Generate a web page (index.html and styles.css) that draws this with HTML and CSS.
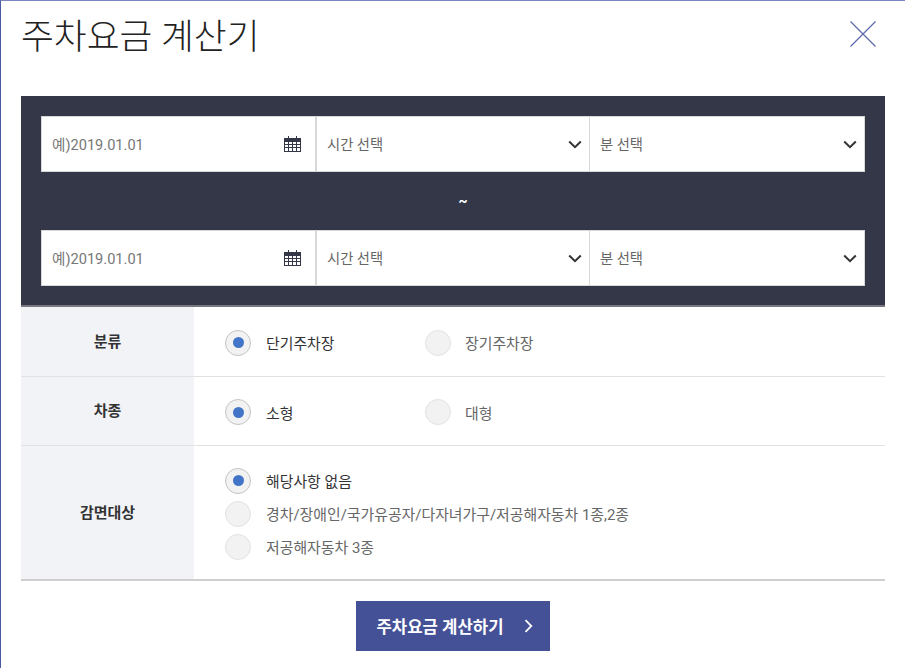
FILE: index.html
```html
<!DOCTYPE html>
<html lang="ko">
<head>
    <meta charset="UTF-8">
    <meta name="viewport" content="width=device-width, initial-scale=1.0">
    <title>주차요금 계산기</title>
    <link rel="stylesheet" href="styles.css">
</head>
<body>
    <div class="popup">
        <header class="popuphead">
            <h1>주차요금 계산기</h1>
            <button class="close" type="button" aria-label="닫기">
                <svg width="26" height="26" viewBox="0 0 26 26"><path d="M0.5 0.5L25.5 25.5M25.5 0.5L0.5 25.5" fill="none" stroke="#5a68ad" stroke-width="1.2"/></svg>
            </button>
        </header>

        <div class="datebox">
            <div class="daterow">
                <div class="field datefield">
                    <span class="placeholder">예)2019.01.01</span>
                    <svg class="calicon" width="17" height="16" viewBox="0 0 17 16"><path d="M4 0h1v2H4zM12 0h1v2h-1z" fill="#333748"/><path fill-rule="evenodd" fill="#333748" d="M0 2h17v14H0zM1 6v2h3V6zM5 6v2h3V6zM9 6v2h3V6zM13 6v2h3V6zM1 9v2h3V9zM5 9v2h3V9zM9 9v2h3V9zM13 9v2h3V9zM1 12v3h3v-3zM5 12v3h3v-3zM9 12v3h3v-3zM13 12v3h3v-3z"/></svg>
                </div>
                <div class="field selectfield timefield">
                    <span>시간 선택</span>
                    <svg class="chevron" width="14" height="9" viewBox="0 0 14 9"><path d="M1.2 1.5L7 7.2L12.8 1.5" fill="none" stroke="#333" stroke-width="2"/></svg>
                </div>
                <div class="field selectfield">
                    <span>분 선택</span>
                    <svg class="chevron" width="14" height="9" viewBox="0 0 14 9"><path d="M1.2 1.5L7 7.2L12.8 1.5" fill="none" stroke="#333" stroke-width="2"/></svg>
                </div>
            </div>
            <div class="tilde">~</div>
            <div class="daterow">
                <div class="field datefield">
                    <span class="placeholder">예)2019.01.01</span>
                    <svg class="calicon" width="17" height="16" viewBox="0 0 17 16"><path d="M4 0h1v2H4zM12 0h1v2h-1z" fill="#333748"/><path fill-rule="evenodd" fill="#333748" d="M0 2h17v14H0zM1 6v2h3V6zM5 6v2h3V6zM9 6v2h3V6zM13 6v2h3V6zM1 9v2h3V9zM5 9v2h3V9zM9 9v2h3V9zM13 9v2h3V9zM1 12v3h3v-3zM5 12v3h3v-3zM9 12v3h3v-3zM13 12v3h3v-3z"/></svg>
                </div>
                <div class="field selectfield timefield">
                    <span>시간 선택</span>
                    <svg class="chevron" width="14" height="9" viewBox="0 0 14 9"><path d="M1.2 1.5L7 7.2L12.8 1.5" fill="none" stroke="#333" stroke-width="2"/></svg>
                </div>
                <div class="field selectfield">
                    <span>분 선택</span>
                    <svg class="chevron" width="14" height="9" viewBox="0 0 14 9"><path d="M1.2 1.5L7 7.2L12.8 1.5" fill="none" stroke="#333" stroke-width="2"/></svg>
                </div>
            </div>
        </div>

        <div class="options">
            <div class="optionrow">
                <div class="optionname">분류</div>
                <div class="optionvalues inline">
                    <label class="radio checked"><i></i>단기주차장</label>
                    <label class="radio"><i></i>장기주차장</label>
                </div>
            </div>
            <div class="optionrow">
                <div class="optionname">차종</div>
                <div class="optionvalues inline">
                    <label class="radio checked"><i></i>소형</label>
                    <label class="radio"><i></i>대형</label>
                </div>
            </div>
            <div class="optionrow lastrow">
                <div class="optionname">감면대상</div>
                <div class="optionvalues stacked">
                    <label class="radio checked"><i></i>해당사항 없음</label>
                    <label class="radio"><i></i>경차/장애인/국가유공자/다자녀가구/저공해자동차 1종,2종</label>
                    <label class="radio"><i></i>저공해자동차 3종</label>
                </div>
            </div>
        </div>

        <div class="actions">
            <button class="calcbtn" type="button">
                주차요금 계산하기
                <svg width="9" height="14" viewBox="0 0 9 14"><path d="M1.5 1.2L7.3 7L1.5 12.8" fill="none" stroke="#fff" stroke-width="1.8"/></svg>
            </button>
        </div>
    </div>
</body>
</html>
```

FILE: styles.css
```css
* {
    box-sizing: border-box;
}

html,
body {
    height: 100%;
}

body {
    margin: 0;
    background-color: #fff;
    color: #333;
    font-family: "Roboto", "Noto Sans CJK KR", sans-serif;
    font-size: 15px;
    overflow: hidden;
}

.popup {
    height: 668px;
    padding: 0 20px;
    background-color: #fff;
    border-top: 1px solid #7a86bd;
    border-left: 1px solid #4a5aa8;
}

.popuphead {
    display: flex;
    justify-content: space-between;
    align-items: flex-start;
    height: 95px;
}

.popuphead h1 {
    margin: 11px 0 0;
    font-size: 35.7px;
    font-weight: 300;
    line-height: 50px;
    color: #222;
}

.close {
    margin: 20px 9px 0 0;
    padding: 0;
    width: 26px;
    height: 26px;
    background: none;
    border: none;
    cursor: pointer;
}

.close svg {
    display: block;
}

.datebox {
    padding: 20px 20px 19px;
    height: 211px;
    background-color: #333748;
    border-bottom: 2px solid #77787f;
}

.daterow {
    display: flex;
    height: 56px;
    background-color: #fff;
    border: 1px solid #d8d8d8;
}

.field {
    display: flex;
    justify-content: space-between;
    align-items: center;
    padding: 0 7px 0 10px;
    color: #666;
    font-size: 14.3px;
}

.field span {
    margin-bottom: 2px;
}

.datefield {
    width: 275px;
    padding-right: 14px;
    border-right: 2px solid #d8d8d8;
}

.placeholder {
    color: #777;
    font-size: 14.6px;
}

.selectfield {
    flex: 1;
}

.timefield {
    flex: none;
    width: 273px;
    border-right: 1px solid #d8d8d8;
}

.tilde {
    height: 58px;
    padding-left: 20px;
    line-height: 58px;
    text-align: center;
    color: #fff;
    font-size: 14px;
    font-weight: 700;
}

.optionrow {
    display: flex;
    height: 70px;
    border-bottom: 1px solid #e2e2e2;
}

.optionrow:nth-child(2) {
    height: 69px;
}

.lastrow {
    height: 135px;
    border-bottom: 2px solid #cfcfcf;
}

.optionname {
    display: flex;
    justify-content: center;
    align-items: center;
    width: 173px;
    padding-bottom: 3px;
    background-color: #f2f3f7;
    font-weight: 700;
    font-size: 15px;
    color: #333;
}

.optionvalues {
    flex: 1;
    padding-left: 32px;
}

.inline {
    display: flex;
    align-items: center;
    padding-top: 2px;
}

.inline .radio {
    width: 199px;
}

.stacked {
    display: flex;
    flex-direction: column;
    justify-content: center;
    gap: 7px;
    padding-top: 2px;
}

.radio {
    display: flex;
    align-items: center;
    gap: 14px;
    height: 26px;
    color: #666;
    font-size: 14.9px;
}

.radio i {
    display: flex;
    justify-content: center;
    align-items: center;
    width: 26px;
    height: 26px;
    margin-left: -1px;
    margin-right: 1px;
    background-color: #f2f2f2;
    border: 1px solid #e2e2e2;
    border-radius: 50%;
}

.radio.checked {
    color: #333;
}

.radio.checked i {
    border: 1px solid #c4c4c4;
}

.radio.checked i::before {
    content: "";
    width: 11px;
    height: 11px;
    background-color: #4274c8;
    border-radius: 50%;
}

.inline .radio:last-child {
    margin-left: 1px;
    gap: 13px;
}

.actions {
    display: flex;
    justify-content: center;
    padding-top: 20px;
}

.calcbtn {
    display: flex;
    justify-content: center;
    align-items: center;
    gap: 21px;
    width: 194px;
    height: 50px;
    padding: 0 0 0 4px;
    background-color: #445196;
    color: #fff;
    border: none;
    font-family: inherit;
    font-size: 16.7px;
    font-weight: 700;
    cursor: pointer;
}
```
